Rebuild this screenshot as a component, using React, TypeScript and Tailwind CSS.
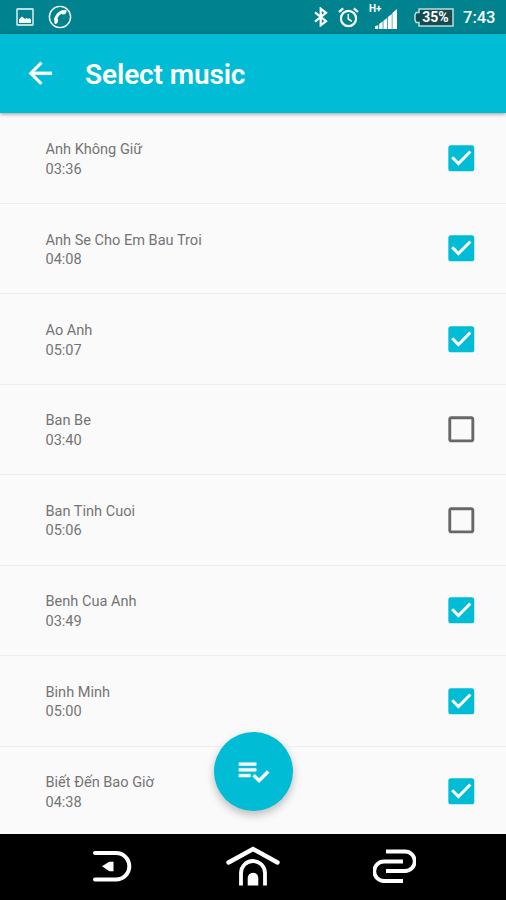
import React from 'react';

interface Song {
  title: string;
  duration: string;
  selected: boolean;
}

const songs: Song[] = [
  { title: 'Anh Không Giữ', duration: '03:36', selected: true },
  { title: 'Anh Se Cho Em Bau Troi', duration: '04:08', selected: true },
  { title: 'Ao Anh', duration: '05:07', selected: true },
  { title: 'Ban Be', duration: '03:40', selected: false },
  { title: 'Ban Tinh Cuoi', duration: '05:06', selected: false },
  { title: 'Benh Cua Anh', duration: '03:49', selected: true },
  { title: 'Binh Minh', duration: '05:00', selected: true },
  { title: 'Biết Đến Bao Giờ', duration: '04:38', selected: true },
];

const StatusBar: React.FC = () => (
  <div className="flex h-[34px] shrink-0 items-center bg-[#00838f] pl-4 pr-[10px] text-white">
    <svg className="h-[18px] w-[18px]" viewBox="0 0 18 18" fill="none">
      <rect x="1" y="1" width="16" height="16" rx="0.5" stroke="#b9dde0" strokeWidth="1.8" />
      <path d="M3 15v-3.8l3-2.7 3 2.5 1.5-1.2 1.5 1.2 1-1 2 1.6V15z" fill="currentColor" />
    </svg>
    <svg className="ml-[13.5px] h-6 w-6" viewBox="0 0 24 24" fill="none">
      <circle cx="12" cy="12" r="10.6" stroke="currentColor" strokeWidth="1.4" />
      <path
        d="M15.5 6.7c-4.3.4-7.4 4.3-7.9 9"
        stroke="currentColor"
        strokeWidth="3"
      />
      <path
        d="M13.2 5.6l4.4-.5c1 0 1.4.8 1 1.5l-1.4 2.6-3.2.4zM6.3 12.6l3.8 1.6-.2 3-1.8 1.7c-.7.5-1.6.1-1.7-.8z"
        fill="currentColor"
      />
    </svg>

    <div className="ml-auto flex items-center">
      <svg className="h-5 w-[14px]" viewBox="0 0 14 20" fill="none" stroke="currentColor" strokeWidth="2.2">
        <path d="M1 5.4l11 8.8L6.7 18.3V1.7L12 5.8 1 14.6" />
      </svg>
      <svg className="ml-[10px] h-[21px] w-[21px]" viewBox="0 0 21 21" fill="none" stroke="currentColor">
        <circle cx="10.5" cy="11.5" r="7.6" strokeWidth="2.2" />
        <path d="M10.3 7v5l3.5 2.3" strokeWidth="1.5" />
        <path d="M1 5l4.2-3.6M20 5l-4.2-3.6" strokeWidth="2.3" />
      </svg>
      <div className="ml-[10px] flex h-[26px] w-[29px] items-start">
        <span className="w-[13px] shrink-0 text-[10px] font-bold leading-[9px]">H+</span>
        <svg className="-ml-[7px] mt-[3px] h-[22px] w-[22px] shrink-0" viewBox="0 0 22 22" fill="currentColor">
          <path d="M0 22v-2.5l3.2-1.5v4zM4.2 22v-5.3l3.5-2.3V22zM8.4 22v-8.3l3.8-2.8V22zM12.9 22V10l3.9-3v15zM17.4 22V6L22 2v20z" />
        </svg>
      </div>
      <div className="relative ml-4 flex h-[19px] w-10 items-center justify-center">
        <svg className="absolute inset-0 h-full w-full" viewBox="0 0 40 19" fill="none">
          <path
            d="M5 1h34v17H5v-3.5H2.2L1 12V7l1.2-2.5H5z"
            fill="#164b50"
            stroke="#b9dde0"
            strokeWidth="1.5"
          />
        </svg>
        <span className="relative ml-[3px] text-[14px] font-bold leading-none">35%</span>
      </div>
      <span className="ml-[9px] mt-[2px] w-[33px] whitespace-nowrap text-[16.5px] font-medium leading-none">
        7:43
      </span>
    </div>
  </div>
);

const Checkbox: React.FC<{ checked: boolean }> = ({ checked }) => (
  <svg
    className={`h-[34.6px] w-[34.6px] ${checked ? 'text-[#00bcd4]' : 'text-[#676767]'}`}
    viewBox="0 0 24 24"
    fill="currentColor"
  >
    {checked ? (
      <>
        <rect x="3" y="3" width="18" height="18" rx="1.8" />
        <path d="M5.7 11.3l4.3 4.3 8.3-8.3" fill="none" stroke="white" strokeWidth="2.1" />
      </>
    ) : (
      <path d="M19 5v14H5V5h14m0-2H5c-1.1 0-2 .9-2 2v14c0 1.1.9 2 2 2h14c1.1 0 2-.9 2-2V5c0-1.1-.9-2-2-2z" />
    )}
  </svg>
);

const SongRow: React.FC<{ song: Song }> = ({ song }) => (
  <li className="flex h-[90.45px] shrink-0 items-center justify-between border-b border-[#eeeeee] pl-[45.5px] pr-[27px]">
    <div className="pt-[3px] text-[14.55px] leading-[19.6px] text-[#747474]">
      <p>{song.title}</p>
      <p>{song.duration}</p>
    </div>
    <Checkbox checked={song.selected} />
  </li>
);

const NavigationBar: React.FC = () => (
  <nav className="flex h-[66.5px] shrink-0 items-center justify-between bg-black pb-[2px] pl-[92.5px] pr-[90.5px] text-white">
    <svg className="h-[34px] w-10" viewBox="0 0 40 34" fill="none">
      <path d="M2 4h21a13.3 13.3 0 0 1 0 26.6H2" stroke="currentColor" strokeWidth="4" strokeLinecap="round" />
      <path d="M20.5 12.8v9.4h-4.2L9 17.3l7.3-4.5z" fill="currentColor" />
    </svg>
    <svg className="h-[42px] w-[54px]" viewBox="0 0 54 42" fill="none" stroke="currentColor">
      <path d="M2.5 17.5L27 4l24.5 13.5" strokeWidth="4.4" strokeLinecap="round" />
      <path d="M15 40.5V28a12 12 0 0 1 24 0v12.5" strokeWidth="3.8" />
      <path d="M21.7 40.5V33a5.3 5.3 0 0 1 10.6 0v7.5z" fill="currentColor" stroke="none" />
    </svg>
    <svg className="h-[36px] w-[43px]" viewBox="0 0 43 36" fill="none" stroke="currentColor" strokeWidth="3.8">
      <path d="M13 3.5h19a9.6 9.6 0 0 1 0 19.5H13" />
      <path d="M30 13.5H11a9.6 9.6 0 0 0 0 19.5h19" />
    </svg>
  </nav>
);

export default function App() {
  return (
    <div className="relative flex h-[900px] w-[506px] flex-col overflow-hidden bg-[#fafafa] font-['Roboto',sans-serif]">
      <StatusBar />
      <header className="z-10 flex h-[79px] shrink-0 items-center bg-[#00bcd4] pl-[22.5px] text-white shadow-[0_1px_4px_rgba(0,0,0,0.4)]">
        <svg className="h-[34.6px] w-[34.6px]" viewBox="0 0 24 24" fill="currentColor" stroke="currentColor" strokeWidth="0.25">
          <path d="M20 11H7.83l5.59-5.59L12 4l-8 8 8 8 1.41-1.41L7.83 13H20v-2z" />
        </svg>
        <h1 className="ml-7 mt-[3px] text-[28px] font-semibold leading-none tracking-[-0.12px]">Select music</h1>
      </header>

      <ul className="flex min-h-0 flex-1 flex-col overflow-hidden pt-[0.5px]">
        {songs.map((song) => (
          <SongRow key={song.title} song={song} />
        ))}
      </ul>
      <NavigationBar />

      <button className="absolute left-[214px] top-[732px] flex h-[79px] w-[79px] items-center justify-center rounded-full bg-[#00bcd4] text-white shadow-[0_4px_9px_rgba(0,0,0,0.25)]">
        <svg className="h-[34.6px] w-[34.6px]" viewBox="0 0 24 24" fill="currentColor" stroke="currentColor" strokeWidth="0.35">
          <path d="M14 10H2v2h12v-2zm0-4H2v2h12V6zM2 14v2h8v-2H2zm19.5-2.5L23 13l-6.99 7-4.51-4.5L13 14l3.01 3 5.49-5.5z" />
        </svg>
      </button>
    </div>
  );
}
